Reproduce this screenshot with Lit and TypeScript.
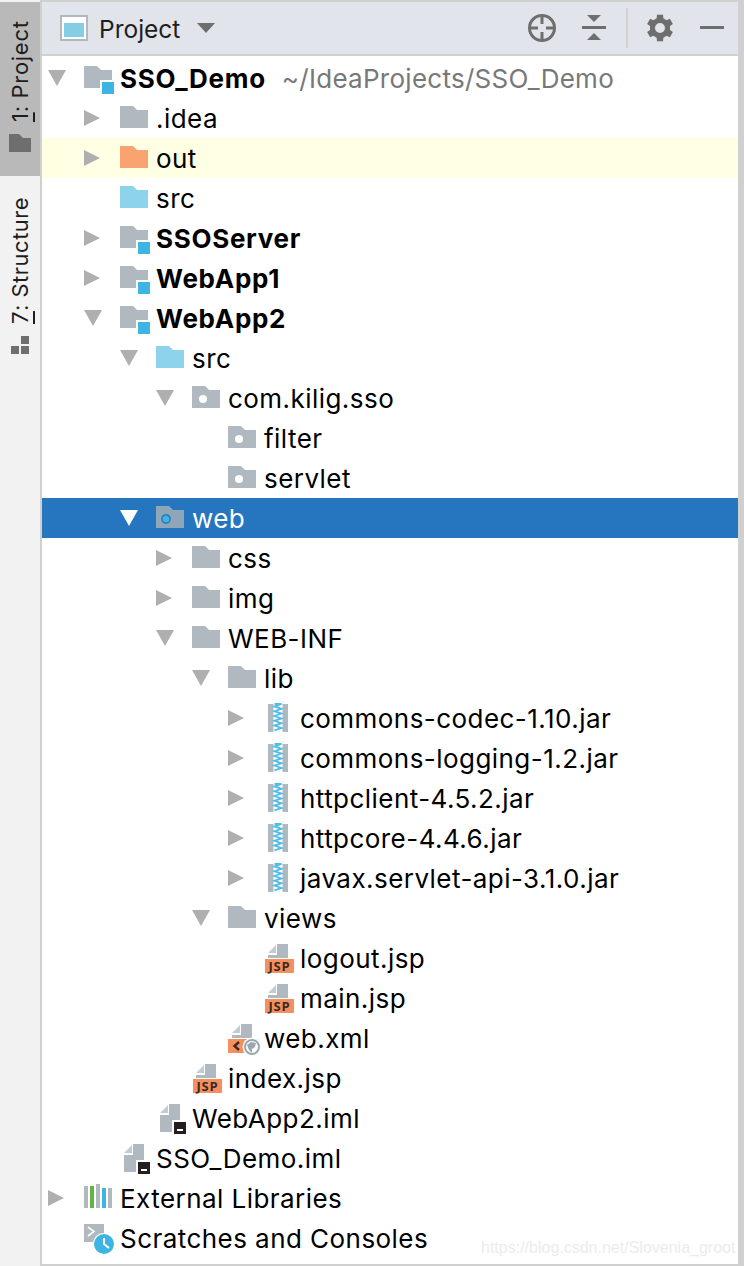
import { LitElement, html, css, svg } from "lit";
import { customElement } from "lit/decorators.js";

type Row = { d: number; arrow?: "r" | "d"; icon: string; t: string; bold?: boolean; hint?: string; cls?: string };

const ROWS: Row[] = [
  { d: 0, arrow: "d", icon: "module", t: "SSO_Demo", bold: true, hint: "~/IdeaProjects/SSO_Demo" },
  { d: 1, arrow: "r", icon: "folder", t: ".idea" },
  { d: 1, arrow: "r", icon: "out", t: "out", cls: "hl" },
  { d: 1, icon: "src", t: "src" },
  { d: 1, arrow: "r", icon: "module", t: "SSOServer", bold: true },
  { d: 1, arrow: "r", icon: "module", t: "WebApp1", bold: true },
  { d: 1, arrow: "d", icon: "module", t: "WebApp2", bold: true },
  { d: 2, arrow: "d", icon: "src", t: "src" },
  { d: 3, arrow: "d", icon: "pkg", t: "com.kilig.sso" },
  { d: 4, icon: "pkg", t: "filter" },
  { d: 4, icon: "pkg", t: "servlet" },
  { d: 2, arrow: "d", icon: "web", t: "web", cls: "sel" },
  { d: 3, arrow: "r", icon: "folder", t: "css" },
  { d: 3, arrow: "r", icon: "folder", t: "img" },
  { d: 3, arrow: "d", icon: "folder", t: "WEB-INF" },
  { d: 4, arrow: "d", icon: "folder", t: "lib" },
  { d: 5, arrow: "r", icon: "jar", t: "commons-codec-1.10.jar" },
  { d: 5, arrow: "r", icon: "jar", t: "commons-logging-1.2.jar" },
  { d: 5, arrow: "r", icon: "jar", t: "httpclient-4.5.2.jar" },
  { d: 5, arrow: "r", icon: "jar", t: "httpcore-4.4.6.jar" },
  { d: 5, arrow: "r", icon: "jar", t: "javax.servlet-api-3.1.0.jar" },
  { d: 4, arrow: "d", icon: "folder", t: "views" },
  { d: 5, icon: "jsp", t: "logout.jsp" },
  { d: 5, icon: "jsp", t: "main.jsp" },
  { d: 4, icon: "xml", t: "web.xml" },
  { d: 3, icon: "jsp", t: "index.jsp" },
  { d: 2, icon: "iml", t: "WebApp2.iml" },
  { d: 1, icon: "iml", t: "SSO_Demo.iml" },
  { d: 0, arrow: "r", icon: "libs", t: "External Libraries" },
  { d: 0, icon: "scratch", t: "Scratches and Consoles" },
];

const folder = (c: string) => svg`<path d="M0 8H13L17 12H28V30H0Z" fill=${c}/>`;

const zig = () => {
  let d = "M10.500 6";
  for (let y = 6, i = 0; y < 34; y += 2.4, i++) d += `L${i % 2 ? 10.5 : 17.5} ${y}`;
  return d;
};

const gearPath = () => {
  const cx = 14, cy = 14, ro = 13.5, ri = 10.2;
  const pts: string[] = [];
  for (let k = 0; k < 6; k++) {
    const a = (-90 + 60 * k) * (Math.PI / 180);
    const step = (Math.PI / 180);
    for (const [r, off] of [[ri, -19], [ro, -13], [ro, 13], [ri, 19]] as [number, number][]) {
      const t = a + off * step;
      pts.push(`${(cx + r * Math.cos(t)).toFixed(2)} ${(cy + r * Math.sin(t)).toFixed(2)}`);
    }
  }
  return `M${pts.join("L")}ZM14 9a5 5 0 1 0 0 10a5 5 0 1 0 0-10Z`;
};

const fileShort = svg`
  <path d="M13 6H24V20H4V17H13Z" fill="#afb9bf"/>
  <path d="M4 15L12 7V15Z" fill="#c3ccd1"/>`;
const fileTall = svg`
  <path d="M13 6H24V34H4V17H13Z" fill="#afb9bf"/>
  <path d="M4 15L12 7V15Z" fill="#c3ccd1"/>`;

const ICONS: Record<string, unknown> = {
  folder: folder("#afb9bf"),
  out: folder("#f9a470"),
  src: folder("#8dd3eb"),
  module: svg`${folder("#afb9bf")}<rect x="16" y="22" width="16" height="16" fill="#fff"/><rect x="18" y="24" width="12" height="12" fill="#3db4e4"/>`,
  pkg: svg`${folder("#afb9bf")}<circle cx="11" cy="21" r="4" fill="#fff"/>`,
  web: svg`${folder("#8ea6b8")}<circle cx="10" cy="21" r="4.2" fill="#3db4e4" stroke="#2271b8" stroke-width="1.2"/>`,
  jar: svg`<rect x="4" y="6" width="20" height="28" fill="#afb9bf"/><rect x="9.500" y="6" width="9" height="28" fill="#fff"/><path d=${zig()} fill="none" stroke="#4fbde6" stroke-width="1.8"/>`,
  jsp: svg`${fileShort}<rect x="1" y="21" width="29" height="14" fill="#f58f5f"/><text x="15.500" y="33" text-anchor="middle" class="badge">JSP</text>`,
  xml: svg`${fileShort}<rect x="0" y="21" width="30" height="14" fill="#f58f5f"/><path d="M11 24L6.500 28L11 32" fill="none" stroke="#3a2a20" stroke-width="2.4"/><circle cx="24" cy="29" r="9.500" fill="#fff"/><circle cx="24" cy="29" r="7" fill="#fff" stroke="#9aa7b0" stroke-width="2"/><path d="M19 27L23 24L28 25L27 29L24 31L24 35L21 32Z" fill="#9aa7b0"/>`,
  iml: svg`${fileTall}<rect x="16" y="22" width="16" height="16" fill="#fff"/><rect x="18" y="24" width="12" height="12" fill="#231f20"/><rect x="21" y="31" width="6" height="2" fill="#fff"/>`,
  libs: svg`<rect x="0" y="8" width="4" height="22" fill="#afb9bf"/><rect x="6" y="8" width="4" height="22" fill="#62b543"/><rect x="12" y="6" width="4" height="24" fill="#afb9bf"/><rect x="18" y="10" width="4" height="20" fill="#3db4e4"/><rect x="24" y="10" width="4" height="20" fill="#afb9bf"/>`,
  scratch: svg`<rect x="0" y="6" width="20" height="18" fill="#afb9bf"/><path d="M4 9L10 13.500L4 18" fill="none" stroke="#fff" stroke-width="1.600"/><circle cx="20" cy="26" r="11" fill="#fff"/><circle cx="20" cy="26" r="10" fill="#3db4e4"/><path d="M20 20V26L25 30" fill="none" stroke="#fff" stroke-width="2"/>`,
};

@customElement("app-root")
export class AppRoot extends LitElement {
  static styles = css`
    :host { display: block; width: 744px; height: 1266px; background: #d0d0d0; font-family: Inter, "Liberation Sans", sans-serif; overflow: hidden; position: relative; }
    .frame { display: flex; height: 1266px; box-sizing: border-box; padding: 2px 6px 2px 0; }
    .strip { width: 40px; flex: none; background: #f2f2f2; margin-right: 2px; margin-top: -2px; margin-bottom: -2px; display: flex; flex-direction: column; }
    .tab { display: flex; flex-direction: column; align-items: center; color: #1d1d1d; font-size: 22px; box-sizing: border-box; }
    .tab.on { background: #b9b9b9; margin-top: 2px; height: 174px; padding-top: 20px; }
    .tab.off { padding-top: 22px; }
    .vt { writing-mode: vertical-rl; transform: rotate(180deg); line-height: 26px; white-space: nowrap; height: 100px; text-align: left; letter-spacing: 0.7px; }
    .off .vt { height: 126px; letter-spacing: 0.5px; }
    .vt u { text-underline-offset: 1px; }
    .tab svg { display: block; margin-top: 12px; }
    .main { flex: 1; display: flex; flex-direction: column; min-width: 0; }
    .head { height: 52px; flex: none; background: #e1e4ea; border-bottom: 2px solid #d0d0d0; display: flex; align-items: center; padding-left: 18px; }
    .head .name { font-size: 24.5px; color: #1e1e1e; margin-left: 11px; width: 98px; padding-top: 2px; }
    .spacer { flex: 1; }
    .tool { display: block; flex: none; }
    .sep { width: 2px; height: 40px; background: #d0d0d0; flex: none; }
    .tree { flex: 1; background: #fff; padding-top: 2px; }
    .row { height: 40px; display: flex; align-items: center; font-size: 26px; letter-spacing: 0.45px; color: #000; white-space: nowrap; box-sizing: border-box; }
    .row.hl { background: #ffffe4; }
    .row.sel { background: #2675bf; color: #fff; }
    .arrow { width: 36px; height: 40px; flex: none; display: block; }
    .icon { width: 36px; height: 40px; flex: none; display: block; overflow: visible; }
    .bold { font-weight: 700; letter-spacing: 0.7px; }
    .hint { color: #787878; margin-left: 16px; letter-spacing: 0.27px; }
    .badge { font: 700 13px "Open Sans", sans-serif; fill: #3a2a20; letter-spacing: 0.8px; }
    .mark { position: absolute; left: 481px; top: 1239px; font: 16px "Liberation Sans", sans-serif; color: #ececec; white-space: nowrap; }
  `;

  private arrow(a: "r" | "d" | undefined, sel: boolean) {
    if (!a) return html`<svg class="arrow"></svg>`;
    const c = sel ? "#fff" : "#afafaf";
    return html`<svg class="arrow" viewBox="0 0 36 40">
      ${a === "r"
        ? svg`<path d="M0 12L16 20L0 28Z" fill=${c}/>`
        : svg`<path d="M0 12H18L9 28Z" fill=${c}/>`}
    </svg>`;
  }

  render() {
    return html`<div class="frame">
      <div class="strip">
        <div class="tab on">
          <div class="vt"><u>1</u>: Project</div>
          <svg width="22" height="18" viewBox="0 0 22 18"><path d="M0 0H10L14 4H22V18H0Z" fill="#6e6e6e"/></svg>
        </div>
        <div class="tab off">
          <div class="vt"><u>7</u>: Structure</div>
          <svg width="18" height="18" viewBox="0 0 18 18" fill="#6e6e6e"><rect x="0" y="10" width="8" height="8"/><rect x="10" y="0" width="8" height="8"/><rect x="10" y="10" width="8" height="8"/></svg>
        </div>
      </div>
      <div class="main">
        <div class="head">
          <svg class="tool" width="28" height="26" viewBox="0 0 28 26"><rect width="28" height="26" fill="#afb9bf"/><rect x="2" y="2" width="24" height="22" fill="#fff"/><rect x="4" y="8" width="20" height="14" fill="#85cde6"/></svg>
          <div class="name">Project</div>
          <svg class="tool" width="18" height="10" viewBox="0 0 18 10"><path d="M0 0H18L9 10Z" fill="#6e6e6e"/></svg>
          <div class="spacer"></div>
          <svg class="tool" width="28" height="28" viewBox="0 0 28 28" fill="none" stroke="#6e6e6e" stroke-width="3"><circle cx="14" cy="14" r="12.500"/><path d="M14 2V10M14 18V26M2 14H10M18 14H26"/></svg>
          <svg class="tool" style="margin-left:26px" width="24" height="26" viewBox="0 0 24 26" fill="#6e6e6e"><path d="M5 0H19L12 7Z"/><rect y="11" width="24" height="3"/><path d="M12 18L19 25H5Z"/></svg>
          <div class="sep" style="margin-left:20px"></div>
          <svg class="tool" style="margin-left:18px" width="28" height="28" viewBox="0 0 28 28"><path fill="#6e6e6e" fill-rule="evenodd" d=${gearPath()}/></svg>
          <svg class="tool" style="margin-left:26px;margin-right:14px" width="24" height="4" viewBox="0 0 24 4"><rect width="24" height="3" fill="#6e6e6e"/></svg>
        </div>
        <div class="tree">
          ${ROWS.map(
            (r) => html`<div class="row ${r.cls ?? ""}" style="padding-left:${6 + r.d * 36}px">
              ${this.arrow(r.arrow, r.cls === "sel")}
              <svg class="icon" viewBox="0 0 36 40">${ICONS[r.icon]}</svg>
              <span class=${r.bold ? "bold" : ""}>${r.t}</span>
              ${r.hint ? html`<span class="hint">${r.hint}</span>` : ""}
            </div>`
          )}
        </div>
      </div>
    </div>
    <div class="mark">https://blog.csdn.net/Slovenia_groot</div>`;
  }
}
